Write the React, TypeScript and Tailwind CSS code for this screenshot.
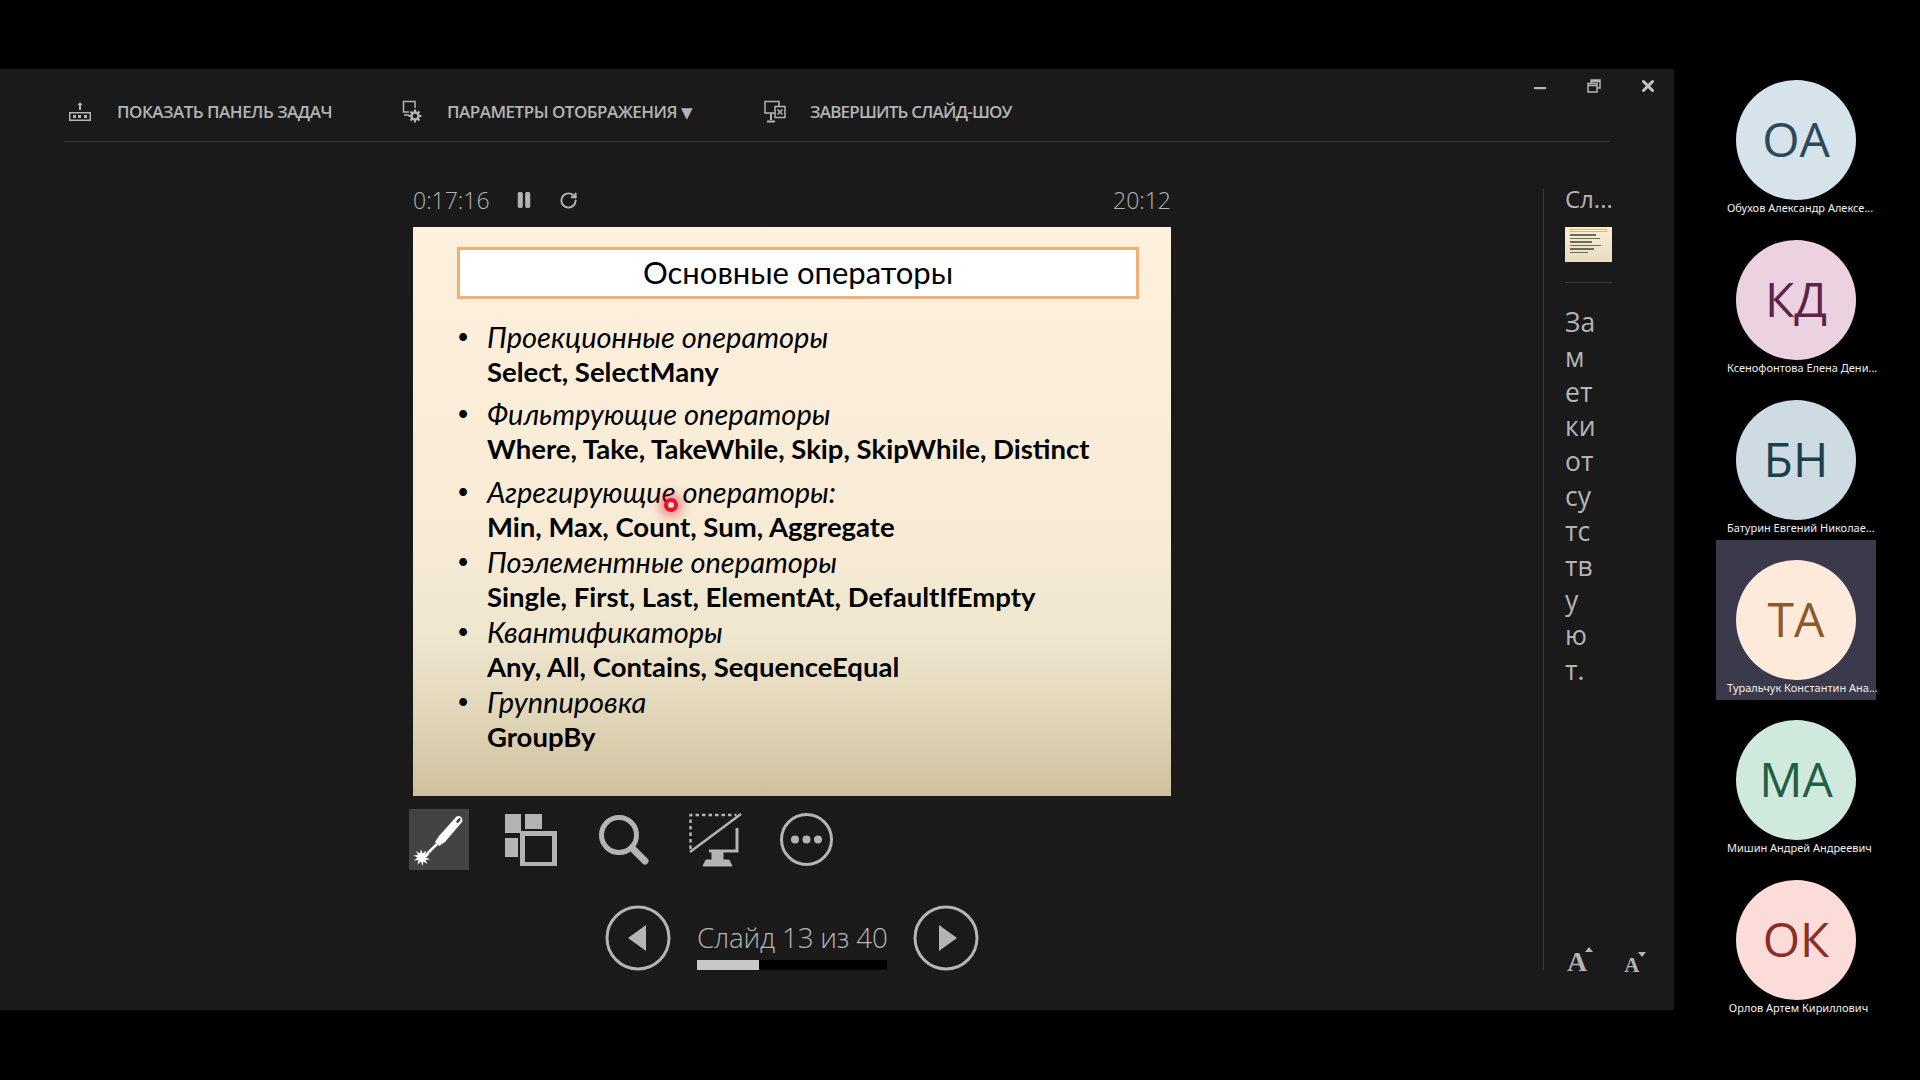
import React from 'react';
import { Pause, RotateCw, Minus, X } from 'lucide-react';

const people = [
  { initials: 'ОА', name: 'Обухов Александр Алексе...', bg: 'bg-[#d6e3ea]', fg: 'text-[#2a4a5a]' },
  { initials: 'КД', name: 'Ксенофонтова Елена Дени...', bg: 'bg-[#ecd2e0]', fg: 'text-[#5e2349]' },
  { initials: 'БН', name: 'Батурин Евгений Николае...', bg: 'bg-[#cfdbe3]', fg: 'text-[#1d3f4b]' },
  { initials: 'ТА', name: 'Туральчук Константин Ана...', bg: 'bg-[#fdeadb]', fg: 'text-[#8a5a2b]', active: true },
  { initials: 'МА', name: 'Мишин Андрей Андреевич', bg: 'bg-[#cfeadd]', fg: 'text-[#1f5f47]' },
  { initials: 'ОК', name: 'Орлов Артем Кириллович', bg: 'bg-[#fbdcd8]', fg: 'text-[#8b2e26]' },
];

const groups = [
  { title: 'Проекционные операторы', items: 'Select, SelectMany', gap: 'mt-0' },
  { title: 'Фильтрующие операторы', items: 'Where, Take, TakeWhile, Skip, SkipWhile, Distinct', gap: 'mt-[7px]' },
  { title: 'Агрегирующие операторы:', items: 'Min, Max, Count, Sum, Aggregate', gap: 'mt-[8px]' },
  { title: 'Поэлементные операторы', items: 'Single, First, Last, ElementAt, DefaultIfEmpty', gap: 'mt-0' },
  { title: 'Квантификаторы', items: 'Any, All, Contains, SequenceEqual', gap: 'mt-0' },
  { title: 'Группировка', items: 'GroupBy', gap: 'mt-0' },
];

const notes = ['За', 'м', 'ет', 'ки', 'от', 'су', 'тс', 'тв', 'у', 'ю', 'т.'];

const TaskbarIcon = () => (
  <svg width="22" height="20" viewBox="0 0 22 20" className="text-[#b4b4b4]" fill="currentColor">
    <path d="M11 0l2.500 3H12v5h-2V3H8.500z" />
    <path fillRule="evenodd" d="M0 10h22v9H0zM1.500 11.500v6h19v-6z" />
    <rect x="4" y="13" width="3" height="3" />
    <rect x="9" y="13" width="3" height="3" />
    <rect x="15" y="13" width="3" height="3" />
  </svg>
);

const DisplayGearIcon = () => (
  <svg width="20" height="24" viewBox="0 0 20 24" className="text-[#b4b4b4]" fill="none" stroke="currentColor">
    <path d="M7 12H1.500V1.500H13V8" strokeWidth="1.500" />
    <path d="M2 15h5" strokeWidth="1.500" />
    <circle cx="13" cy="16" r="3.500" strokeWidth="2.500" />
    <path d="M13 9.500v3M13 19.500v3M6.500 16h3M16.500 16h3M8.500 11.500l2 2M15.500 18.500l2 2M17.500 11.500l-2 2M10.500 18.500l-2 2" strokeWidth="2.200" />
  </svg>
);

const EndShowIcon = () => (
  <svg width="22" height="24" viewBox="0 0 22 24" className="text-[#b4b4b4]" fill="none" stroke="currentColor" strokeWidth="1.500">
    <path d="M11 13H1V1.500h14V6" />
    <path d="M7 13v7M3 21.500h8" strokeWidth="2" />
    <rect x="11" y="6.500" width="10" height="11" />
    <path d="M13.500 9.500l5 5M18.500 9.500l-5 5" />
  </svg>
);

const LaserIcon = () => (
  <svg width="52" height="54" viewBox="0 0 52 54" fill="none">
    <path d="M43 4c3-3 8 1 6 5L32 29l-6 4-4-4 4-6z" fill="#fff" />
    <ellipse cx="45.500" cy="7.500" rx="1.500" ry="3" fill="#4a4a4a" transform="rotate(40 45.500 7.500)" />
    <path d="M24 31L12 43" stroke="#fff" strokeWidth="2.500" />
    <path
      d="M8 36l1.500 4.500 3.500-3-1 4.500 4.500-.5-3.500 3 4 2-4.500.5 2 4-4-2.500-1 4.500-1.500-4.500-3.500 3 1-4.500-4.500.5 3.500-3-4-2 4.500-.5-2-4 4 2.500z"
      fill="#fff"
    />
  </svg>
);

const GridIcon = () => (
  <svg width="52" height="52" viewBox="0 0 52 52" fill="none">
    <rect x="0" y="0" width="16" height="19" fill="#b4b4b4" />
    <rect x="20" y="0" width="17" height="15" fill="#b4b4b4" />
    <rect x="0" y="24" width="13" height="19" fill="#b4b4b4" />
    <rect x="17.500" y="19.500" width="32" height="31" stroke="#b4b4b4" strokeWidth="5" />
  </svg>
);

const SearchIcon = () => (
  <svg width="50" height="50" viewBox="0 0 50 50" fill="none" stroke="#b4b4b4">
    <circle cx="20" cy="20" r="17.500" strokeWidth="5" />
    <path d="M33 33l13 13" strokeWidth="7" strokeLinecap="round" />
  </svg>
);

const MonitorOffIcon = () => (
  <svg width="54" height="54" viewBox="0 0 54 54" fill="none" stroke="#b4b4b4">
    <path d="M1.500 36V2h46" strokeWidth="2.500" strokeDasharray="3.500 3" />
    <path d="M1 39L52 1" strokeWidth="2.500" />
    <path d="M48 15v23H20" strokeWidth="3" />
    <path d="M21 38h18l-5 0v9h6l3 6H14l3-6h6v-9z" fill="#b4b4b4" strokeWidth="1" />
  </svg>
);

const MoreIcon = () => (
  <svg width="53" height="53" viewBox="0 0 53 53" fill="#b4b4b4">
    <circle cx="26.500" cy="26.500" r="25" fill="none" stroke="#b4b4b4" strokeWidth="3" />
    <circle cx="15" cy="26.500" r="4" />
    <circle cx="26.500" cy="26.500" r="4" />
    <circle cx="38" cy="26.500" r="4" />
  </svg>
);

const NavButton = ({ dir }: { dir: 'prev' | 'next' }) => (
  <svg width="66" height="66" viewBox="0 0 66 66" fill="#b4b4b4">
    <circle cx="33" cy="33" r="31" fill="none" stroke="#b4b4b4" strokeWidth="3" />
    {dir === 'prev' ? <path d="M41 20v26L23 33z" /> : <path d="M26 20v26l18-13z" />}
  </svg>
);

const RestoreIcon = () => (
  <svg width="14" height="14" viewBox="0 0 14 14" fill="none" stroke="#b4b4b4" strokeWidth="1.500">
    <rect x="1" y="4.500" width="9" height="8.500" />
    <path d="M4 4V1h9v8h-3M1 6.500h9M4 2.500h9" />
  </svg>
);

const Slide = () => (
  <div className="relative h-[569px] w-[758px] bg-[linear-gradient(180deg,#fef0dc_0%,#f7ebd6_55%,#efe6cf_72%,#e2d7ba_85%,#cfc09d_100%)] pt-[20px] font-['Lato','Open_Sans',sans-serif] text-black">
    <div className="ml-[44px] flex h-[52px] w-[682px] items-center justify-center border-[3px] border-[#f5ae72] bg-white pb-[2px] text-[31px] leading-none">
      Основные операторы
    </div>
    <div className="mt-[20px] ml-[44px]">
      {groups.map((g) => (
        <div key={g.title} className={`flex ${g.gap}`}>
          <div className="w-[30px] text-[21px] leading-[33px]">•</div>
          <div className="leading-[35px]">
            <div className="text-[29px] italic">{g.title}</div>
            <div className="text-[27.500px] font-bold">{g.items}</div>
          </div>
        </div>
      ))}
    </div>
    {/* laser pointer */}
    <div className="absolute top-[271px] left-[251px] h-[14px] w-[14px] rounded-full border-[4px] border-[#e8102c] bg-[#ffd9d9] shadow-[0_0_10px_5px_rgba(240,40,60,0.45)]" />
  </div>
);

export default function App() {
  return (
    <div className="flex h-[1080px] w-[1920px] overflow-hidden bg-black font-['Open_Sans',sans-serif]">
      <div className="flex w-[1674px] flex-col pt-[69px]">
        <div className="flex h-[941px] flex-col bg-[#1a1a1a]">
          <div className="flex h-[30px] items-center justify-end gap-[38px] pt-[4px] pr-[17px]">
            <Minus size={18} strokeWidth={3} className="mt-[4px] text-[#b4b4b4]" />
            <RestoreIcon />
            <X size={18} strokeWidth={4} className="text-[#c4c4c4]" />
          </div>
          <div className="mx-[64px] flex h-[43px] items-start border-b border-[#3a3a3a] text-[17px] font-semibold tracking-[-0.5px] text-[#b4b4b4]">
            <div className="ml-[5px] flex items-center">
              <TaskbarIcon />
              <span className="ml-[26px]">ПОКАЗАТЬ ПАНЕЛЬ ЗАДАЧ</span>
            </div>
            <div className="ml-[70px] flex items-center">
              <DisplayGearIcon />
              <span className="ml-[25px]">
                ПАРАМЕТРЫ ОТОБРАЖЕНИЯ <span className="font-['DejaVu_Sans',sans-serif] text-[15px]">▼</span>
              </span>
            </div>
            <div className="ml-[72px] flex items-center">
              <EndShowIcon />
              <span className="ml-[24px] tracking-[-0.8px]">ЗАВЕРШИТЬ СЛАЙД-ШОУ</span>
            </div>
          </div>

          <div className="flex flex-1">
            <div className="w-[1543px] pt-[44px] pl-[413px]">
              <div className="flex h-[41px] w-[758px] items-start justify-between text-[23px] font-light leading-[28px] text-[#b4b4b4]">
                <div className="flex items-center">
                  <span>0:17:16</span>
                  <Pause size={20} fill="currentColor" strokeWidth={1} className="ml-[24px]" />
                  <RotateCw size={19} strokeWidth={2.5} className="ml-[25px]" />
                </div>
                <span>20:12</span>
              </div>
              <Slide />
              <div className="mt-[13px] -ml-[4px] flex h-[61px] w-[430px] items-center">
                <div className="flex h-[61px] w-[60px] items-center justify-center bg-[#434343]">
                  <LaserIcon />
                </div>
                <div className="ml-[36px]"><GridIcon /></div>
                <div className="ml-[42px]"><SearchIcon /></div>
                <div className="ml-[40px]"><MonitorOffIcon /></div>
                <div className="ml-[37px]"><MoreIcon /></div>
              </div>
              <div className="mt-[35px] ml-[192px] flex items-start">
                <NavButton dir="prev" />
                <div className="mr-[26px] ml-[26px] w-[190px] pt-[15px]">
                  <div className="text-[27.800px] font-light leading-[34px] tracking-[-0.2px] whitespace-nowrap text-[#b4b4b4]">
                    Слайд 13 из 40
                  </div>
                  <div className="mt-[6px] h-[10px] w-[190px] bg-black">
                    <div className="h-full w-[62px] bg-[#c8c8c8]" />
                  </div>
                </div>
                <NavButton dir="next" />
              </div>
            </div>

            <div className="mt-[47px] mb-[40px] flex flex-1 flex-col border-l border-[#3a3a3a] pl-[21px] text-[#b4b4b4]">
              <div className="text-[24px] leading-[20px]">Сл...</div>
              <div className="mt-[18px] flex h-[35px] w-[47px] flex-col gap-[2px] bg-[linear-gradient(180deg,#fbeed8,#e8dcbe)] px-[5px] pt-[2px]">
                <div className="h-[3px] border border-[#f3a768] bg-white" />
                <div className="h-[2px] w-[26px] bg-[#6d6a60]" />
                <div className="h-[1px] w-[30px] bg-[#6d6a60]" />
                <div className="h-[2px] w-[22px] bg-[#6d6a60]" />
                <div className="h-[1px] w-[31px] bg-[#6d6a60]" />
                <div className="h-[2px] w-[24px] bg-[#6d6a60]" />
                <div className="h-[1px] w-[18px] bg-[#6d6a60]" />
              </div>
              <div className="mt-[20px] h-px w-[47px] bg-[#3a3a3a]" />
              <div className="mt-[22px] text-[26.500px] leading-[34.8px]">
                {notes.map((n) => (
                  <div key={n}>{n}</div>
                ))}
              </div>
              <div className="mt-auto -mb-[6px] flex items-end pl-[2px] font-['Liberation_Serif',serif] font-bold leading-none">
                <span className="relative text-[28px]">
                  A
                  <span className="absolute -top-[1px] -right-[6px] h-0 w-0 border-x-[4px] border-b-[5px] border-x-transparent border-b-[#b4b4b4]" />
                </span>
                <span className="relative ml-[37px] text-[21px]">
                  A
                  <span className="absolute -top-[3px] -right-[7px] h-0 w-0 border-x-[4px] border-t-[5px] border-x-transparent border-t-[#b4b4b4]" />
                </span>
              </div>
            </div>
          </div>
        </div>
      </div>

      <div className="flex-1 pt-[60px] pl-[42px]">
        {people.map((p) => (
          <div
            key={p.initials}
            className={`flex h-[160px] w-[160px] flex-col items-center pt-[20px] ${p.active ? 'bg-[#3a3a4c]' : ''}`}
          >
            <div className={`flex h-[120px] w-[120px] items-center justify-center rounded-full pb-[2px] text-[48px] font-medium leading-none ${p.bg} ${p.fg}`}>
              {p.initials}
            </div>
            <div className="w-[148px] pl-[5px] text-center font-['Noto_Sans',sans-serif] text-[11px] leading-[16px] whitespace-nowrap text-[#f0f0f0]">
              {p.name}
            </div>
          </div>
        ))}
      </div>
    </div>
  );
}
